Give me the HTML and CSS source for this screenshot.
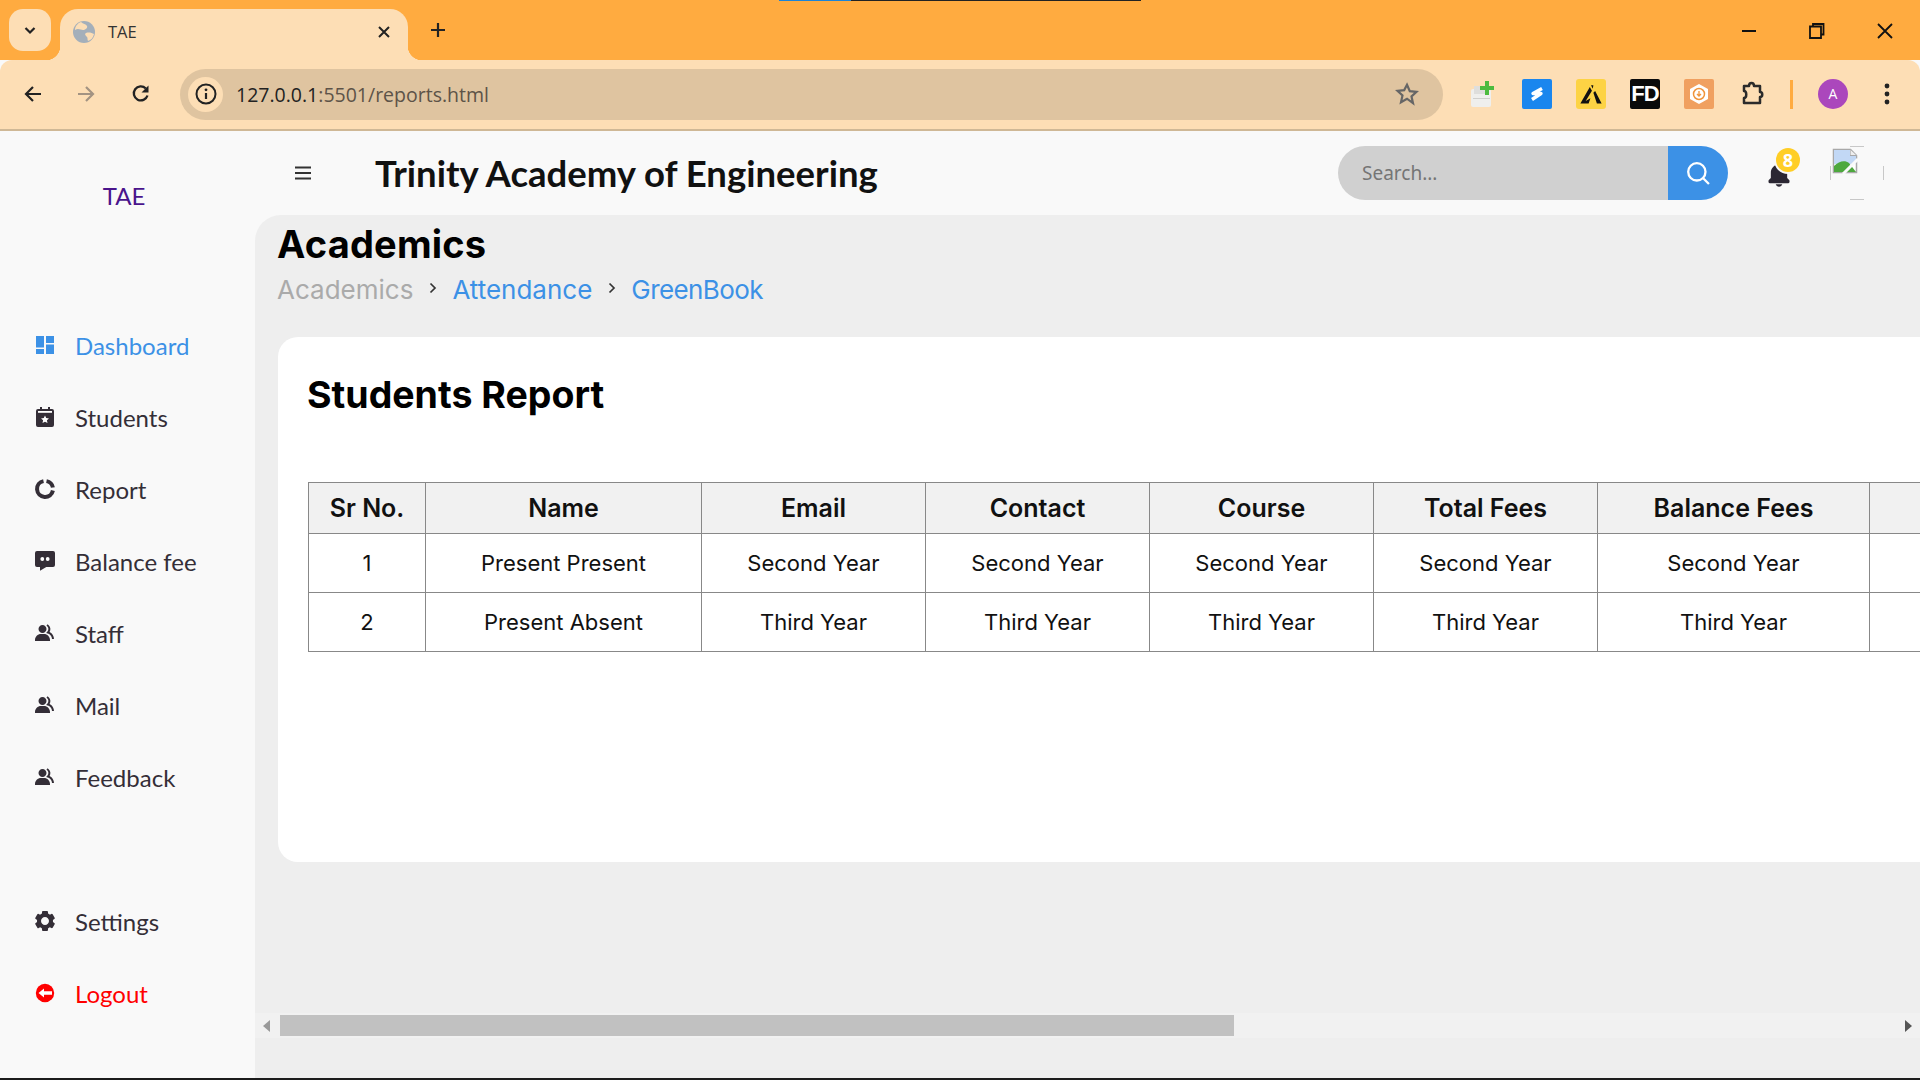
FILE: index.html
```html
<!DOCTYPE html>
<html lang="en">
<head>
    <meta charset="UTF-8">
    <meta name="viewport" content="width=device-width, initial-scale=1.0">
    <title>TAE</title>
    <link rel="stylesheet" href="styles.css">
</head>
<body>

<!-- browser chrome -->
<div class="tabstrip">
    <div class="loading-line"><span class="loading-blue"></span></div>
    <div class="tab-search">
        <svg width="18" height="18" viewBox="0 0 18 18"><path d="M4.500 7l4.500 4.500L13.500 7" fill="none" stroke="#222" stroke-width="2.200"/></svg>
    </div>
    <div class="tab">
        <svg class="favicon" width="22" height="22" viewBox="0 0 22 22"><circle cx="11" cy="11" r="11" fill="#a4afba"/><path d="M8 1c2 2 5 2 6 4s-2 4-4 4-5-2-8 0c0-4 3-7 6-8zM13 12c3-1 6 0 8 1-1 4-3 6-6 7-1-2 0-3-1-4s-3-3-1-4z" fill="#fddeb5"/></svg>
        <span class="tab-title">TAE</span>
        <svg class="tab-close" width="14" height="14" viewBox="0 0 14 14"><path d="M2 2l10 10M12 2L2 12" stroke="#222" stroke-width="2"/></svg>
    </div>
    <svg class="new-tab" width="18" height="18" viewBox="0 0 18 18"><path d="M9 2v14M2 9h14" stroke="#222" stroke-width="2.200"/></svg>
    <div class="window-controls">
        <svg width="16" height="16" viewBox="0 0 16 16"><path d="M1 8h14" stroke="#111" stroke-width="2"/></svg>
        <svg width="16" height="16" viewBox="0 0 16 16"><path d="M4 3.500V1h10.500v10.500H12M1 3.500h11V15H1z" fill="none" stroke="#111" stroke-width="1.800"/></svg>
        <svg width="16" height="16" viewBox="0 0 16 16"><path d="M1 1l14 14M15 1L1 15" stroke="#111" stroke-width="1.800"/></svg>
    </div>
</div>

<div class="toolbar">
    <div class="nav-buttons">
        <svg width="20" height="20" viewBox="0 0 20 20"><path d="M18 10H3M10 3l-7 7 7 7" fill="none" stroke="#222" stroke-width="2.200"/></svg>
        <svg width="20" height="20" viewBox="0 0 20 20"><path d="M2 10h15M10 3l7 7-7 7" fill="none" stroke="#a39382" stroke-width="2.200"/></svg>
        <svg class="reload" width="20" height="20" viewBox="0 0 20 20"><path d="M16.500 11.500A7 7 0 1 1 14.800 4.500" fill="none" stroke="#222" stroke-width="2.300"/><path d="M17.500 1.500v7h-7z" fill="#222"/></svg>
    </div>
    <div class="urlbar">
        <div class="site-info">
            <svg width="22" height="22" viewBox="0 0 22 22"><circle cx="11" cy="11" r="9.500" fill="none" stroke="#222" stroke-width="2"/><path d="M11 10v6" stroke="#222" stroke-width="2.200"/><circle cx="11" cy="6.800" r="1.400" fill="#222"/></svg>
        </div>
        <span class="url"><span class="url-host">127.0.0.1</span>:5501/reports.html</span>
        <svg class="star" width="24" height="24" viewBox="0 0 24 24"><path d="M12 2.800l2.800 6.300 6.800.7-5.100 4.600 1.500 6.800L12 16.700l-6 3.500 1.500-6.800-5.100-4.600 6.800-.7z" fill="none" stroke="#666" stroke-width="2.200"/></svg>
    </div>
    <div class="extensions">
        <div class="ext">
            <svg width="26" height="28" viewBox="0 0 26 28"><rect x="1" y="9" width="20" height="18" rx="2" fill="#efefed"/><rect x="4" y="6" width="15" height="8" fill="#dededc"/><rect x="3" y="18" width="17" height="1" fill="#cfcfcd"/><path d="M15 1h4v5h5v4h-5v5h-4v-5h-5V6h5z" fill="#4cbb3f"/></svg>
        </div>
        <div class="ext ext-blue">
            <svg width="20" height="20" viewBox="0 0 20 20"><path d="M15 4.500L6 9.500h8L5 15.500" fill="none" stroke="#fff" stroke-width="3.400" stroke-linejoin="round"/></svg>
        </div>
        <div class="ext ext-yellow">
            <svg width="26" height="26" viewBox="0 0 22 22"><path d="M2 19L10 5l1.800 3.200L6.500 17l4-2.500L9 19z" fill="#111"/><path d="M12.500 6.500L11 3.500h2zM13 10l1.500-1.500L20 19h-4z" fill="#111"/></svg>
        </div>
        <div class="ext ext-fd">FD</div>
        <div class="ext ext-orange">
            <svg width="24" height="24" viewBox="0 0 24 24"><path d="M12 2l9 5v10l-9 5-9-5V7z" fill="#fff"/><circle cx="12" cy="12" r="5.500" fill="none" stroke="#f0953c" stroke-width="1.500"/><path d="M12 9v5M10 12l2 2 2-2" fill="none" stroke="#f0953c" stroke-width="1.300"/></svg>
        </div>
        <div class="ext">
            <svg width="26" height="26" viewBox="0 0 26 26"><path d="M4 5h5c0-4 5-4 5 0h6v6c3 0 3 5 0 5v6H4v-5c3 0 3-7 0-7z" fill="none" stroke="#2b2b2b" stroke-width="2.500" stroke-linejoin="round"/></svg>
        </div>
    </div>
    <div class="toolbar-sep"></div>
    <div class="avatar">A</div>
    <svg class="kebab" width="6" height="24" viewBox="0 0 6 24"><circle cx="3" cy="4" r="2.400" fill="#222"/><circle cx="3" cy="12" r="2.400" fill="#222"/><circle cx="3" cy="20" r="2.400" fill="#222"/></svg>
</div>

<!-- page -->
<div class="app">
    <aside class="sidebar">
        <div class="brand">TAE</div>
        <nav class="menu">
            <a class="menu-item active">
                <svg class="icon" viewBox="0 0 24 24" fill="currentColor"><rect x="3" y="3" width="8" height="11.500"/><rect x="3" y="16" width="8" height="5"/><rect x="13" y="3" width="8" height="7"/><rect x="13" y="11.500" width="8" height="9.500"/></svg>
                Dashboard
            </a>
            <a class="menu-item">
                <svg class="icon" viewBox="0 0 24 24" fill="currentColor"><path d="M5 4h2V2h2v2h6V2h2v2h2a2 2 0 0 1 2 2v14a2 2 0 0 1-2 2H5a2 2 0 0 1-2-2V6a2 2 0 0 1 2-2z"/><rect x="5" y="6" width="14" height="1.800" fill="#fff"/><path d="M12 10.500l1.200 2.600 2.800.3-2.100 1.900.6 2.800-2.500-1.400-2.500 1.400.6-2.800L8 13.400l2.800-.3z" fill="#fff"/></svg>
                Students
            </a>
            <a class="menu-item">
                <svg class="icon" viewBox="0 0 24 24"><path d="M10.500 4.100A8 8 0 1 0 19.900 13.500" fill="none" stroke="currentColor" stroke-width="4"/><path d="M13.500 4.100A8 8 0 0 1 19.900 10.500" fill="none" stroke="currentColor" stroke-width="4"/></svg>
                Report
            </a>
            <a class="menu-item">
                <svg class="icon" viewBox="0 0 24 24" fill="currentColor"><path d="M4 2h16a2 2 0 0 1 2 2v12a2 2 0 0 1-2 2h-6.700L7 21.800V18H4a2 2 0 0 1-2-2V4a2 2 0 0 1 2-2z"/><circle cx="9.300" cy="10" r="1.900" fill="#fff"/><circle cx="14.700" cy="10" r="1.900" fill="#fff"/></svg>
                Balance fee
            </a>
            <a class="menu-item">
                <svg class="icon" viewBox="0 0 24 24" fill="currentColor"><path d="M16.604 11.048a5.670 5.670 0 0 0 .751-3.440c-.179-1.784-1.175-3.361-2.803-4.440l-1.105 1.666c1.119.742 1.800 1.799 1.918 2.974a3.693 3.693 0 0 1-1.072 2.986l-1.192 1.192 1.618.475C18.951 13.701 19 17.957 19 18h2c0-1.789-.956-5.285-4.396-6.952z"/><path d="M9.500 12c2.206 0 4-1.794 4-4s-1.794-4-4-4-4 1.794-4 4 1.794 4 4 4zm1.500 1H8c-3.309 0-6 2.691-6 6v1h15v-1c0-3.309-2.691-6-6-6z"/></svg>
                Staff
            </a>
            <a class="menu-item">
                <svg class="icon" viewBox="0 0 24 24" fill="currentColor"><path d="M16.604 11.048a5.670 5.670 0 0 0 .751-3.440c-.179-1.784-1.175-3.361-2.803-4.440l-1.105 1.666c1.119.742 1.800 1.799 1.918 2.974a3.693 3.693 0 0 1-1.072 2.986l-1.192 1.192 1.618.475C18.951 13.701 19 17.957 19 18h2c0-1.789-.956-5.285-4.396-6.952z"/><path d="M9.500 12c2.206 0 4-1.794 4-4s-1.794-4-4-4-4 1.794-4 4 1.794 4 4 4zm1.500 1H8c-3.309 0-6 2.691-6 6v1h15v-1c0-3.309-2.691-6-6-6z"/></svg>
                Mail
            </a>
            <a class="menu-item">
                <svg class="icon" viewBox="0 0 24 24" fill="currentColor"><path d="M16.604 11.048a5.670 5.670 0 0 0 .751-3.440c-.179-1.784-1.175-3.361-2.803-4.440l-1.105 1.666c1.119.742 1.800 1.799 1.918 2.974a3.693 3.693 0 0 1-1.072 2.986l-1.192 1.192 1.618.475C18.951 13.701 19 17.957 19 18h2c0-1.789-.956-5.285-4.396-6.952z"/><path d="M9.500 12c2.206 0 4-1.794 4-4s-1.794-4-4-4-4 1.794-4 4 1.794 4 4 4zm1.500 1H8c-3.309 0-6 2.691-6 6v1h15v-1c0-3.309-2.691-6-6-6z"/></svg>
                Feedback
            </a>
        </nav>
        <nav class="menu menu-bottom">
            <a class="menu-item">
                <svg class="icon" viewBox="0 0 24 24" fill="currentColor"><path d="m2.344 15.271 2 3.460a1 1 0 0 0 1.366.365l1.396-.806c.580.457 1.221.832 1.895 1.112V21a1 1 0 0 0 1 1h4a1 1 0 0 0 1-1v-1.598a8.094 8.094 0 0 0 1.895-1.112l1.396.806c.477.275 1.091.110 1.366-.365l2-3.460a1.004 1.004 0 0 0-.365-1.366l-1.372-.793a7.683 7.683 0 0 0-.002-2.224l1.372-.793c.476-.275.641-.890.365-1.366l-2-3.460a1 1 0 0 0-1.366-.365l-1.396.806A8.034 8.034 0 0 0 15 4.598V3a1 1 0 0 0-1-1h-4a1 1 0 0 0-1 1v1.598A8.094 8.094 0 0 0 7.105 5.710L5.710 4.904a.999.999 0 0 0-1.366.365l-2 3.460a1.004 1.004 0 0 0 .365 1.366l1.372.793a7.683 7.683 0 0 0 0 2.224l-1.372.793c-.476.275-.641.890-.365 1.366zM12 8c2.206 0 4 1.794 4 4s-1.794 4-4 4-4-1.794-4-4 1.794-4 4-4z"/></svg>
                Settings
            </a>
            <a class="menu-item logout">
                <svg class="icon" viewBox="0 0 24 24"><circle cx="12" cy="12" r="9.200" fill="currentColor"/><path d="M19 10.300h-8V7.500L5.500 12l5.500 4.500v-2.800h8z" fill="#fff"/></svg>
                Logout
            </a>
        </nav>
    </aside>

    <div class="right-side">
        <header class="topbar">
            <svg class="hamburger" width="18" height="14" viewBox="0 0 18 14"><path d="M1 1.500h16M1 7h16M1 12.500h16" stroke="#333" stroke-width="1.800"/></svg>
            <div class="college-name">Trinity Academy of Engineering</div>
            <div class="search">
                <input class="search-input" type="text" placeholder="Search...">
                <button class="search-button">
                    <svg width="30" height="30" viewBox="0 0 26 26"><circle cx="12" cy="12" r="7.500" fill="none" stroke="#fff" stroke-width="2"/><path d="M17.500 17.500l5 5" stroke="#fff" stroke-width="2"/></svg>
                </button>
            </div>
            <div class="bell">
                <svg width="28" height="28" viewBox="0 0 24 24" fill="#2b2733"><path d="M12 22c1.311 0 2.407-.834 2.818-2H9.182C9.593 21.166 10.689 22 12 22zm7-7.414V10c0-3.217-2.185-5.927-5.145-6.742C13.562 2.520 12.846 2 12 2s-1.562.520-1.855 1.258C7.185 4.074 5 6.783 5 10v4.586l-1.707 1.707A.996.996 0 0 0 3 17v1a1 1 0 0 0 1 1h16a1 1 0 0 0 1-1v-1a.996.996 0 0 0-.293-.707L19 14.586z"/></svg>
                <span class="badge">8</span>
            </div>
            <svg class="profile-pic" width="54" height="54" viewBox="0 0 54 54">
                <path d="M20 .500h14M.500 20v14M53.500 20v14M20 53.500h14" fill="none" stroke="#c8c8c8"/>
                <path d="M3.500 3.500h17l6 6v17h-23z" fill="#fff" stroke="#a8a8a8" stroke-width="1.500"/>
                <path d="M20 3.500v6h6.500" fill="#eee" stroke="#a8a8a8" stroke-width="1.200"/>
                <path d="M4 4h16v6h6v8H4z" fill="#c2d8f5"/>
                <path d="M4 26v-6c5-5 11-6 15-3l7 9z" fill="#4da83e"/>
                <path d="M28 13L13 28" stroke="#fafafa" stroke-width="3"/>
            </svg>
        </header>

        <main class="main">
            <div class="scroll-area">
                <h1 class="page-title">Academics</h1>
                <div class="breadcrumb">
                    <span class="crumb-muted">Academics</span>
                    <svg class="crumb-sep" width="10" height="14" viewBox="0 0 10 14"><path d="M2.500 2.500L7 7l-4.500 4.500" fill="none" stroke="#333" stroke-width="1.700"/></svg>
                    <span class="crumb-link">Attendance</span>
                    <svg class="crumb-sep" width="10" height="14" viewBox="0 0 10 14"><path d="M2.500 2.500L7 7l-4.500 4.500" fill="none" stroke="#333" stroke-width="1.700"/></svg>
                    <span class="crumb-link crumb-last">GreenBook</span>
                </div>
                <section class="card">
                    <h2 class="card-title">Students Report</h2>
                    <table class="report-table">
                        <colgroup>
                            <col class="col-sr"><col class="col-name"><col class="col-std"><col class="col-std"><col class="col-std"><col class="col-std"><col class="col-bal"><col class="col-last">
                        </colgroup>
                        <thead>
                            <tr>
                                <th>Sr No.</th>
                                <th>Name</th>
                                <th>Email</th>
                                <th>Contact</th>
                                <th>Course</th>
                                <th>Total Fees</th>
                                <th>Balance Fees</th>
                                <th></th>
                            </tr>
                        </thead>
                        <tbody>
                            <tr>
                                <td>1</td>
                                <td>Present Present</td>
                                <td>Second Year</td>
                                <td>Second Year</td>
                                <td>Second Year</td>
                                <td>Second Year</td>
                                <td>Second Year</td>
                                <td></td>
                            </tr>
                            <tr>
                                <td>2</td>
                                <td>Present Absent</td>
                                <td>Third Year</td>
                                <td>Third Year</td>
                                <td>Third Year</td>
                                <td>Third Year</td>
                                <td>Third Year</td>
                                <td></td>
                            </tr>
                        </tbody>
                    </table>
                </section>
            </div>
            <div class="scrollbar">
                <span class="arrow-left"></span>
                <div class="scroll-track"><div class="scroll-thumb"></div></div>
                <span class="arrow-right"></span>
            </div>
        </main>
    </div>
</div>
<div class="bottom-line"></div>

</body>
</html>
```

FILE: styles.css
```css
* {
    box-sizing: border-box;
}
html, body {
    margin: 0;
    padding: 0;
    height: 100%;
    overflow: hidden;
}
body {
    display: flex;
    flex-direction: column;
    height: 1080px;
    background: #f9f9f9;
    font-family: 'Lato', sans-serif;
}

/* browser chrome */
.tabstrip {
    position: relative;
    display: flex;
    align-items: flex-end;
    height: 60px;
    background: #ffab40;
    flex-shrink: 0;
}
.loading-line {
    position: absolute;
    top: 0;
    left: 779px;
    width: 362px;
    height: 1px;
    background: #222;
}
.loading-blue {
    display: block;
    width: 72px;
    height: 1px;
    background: #1a84d8;
}
.tab-search {
    display: flex;
    align-items: center;
    justify-content: center;
    width: 42px;
    height: 42px;
    margin: 0 9px 9px 9px;
    background: #fddeb5;
    border-radius: 14px;
}
.tab {
    position: relative;
    display: flex;
    align-items: center;
    width: 348px;
    height: 51px;
    padding: 0 17px 6px 13px;
    background: #fddeb5;
    border-radius: 18px 18px 0 0;
}
.tab::before, .tab::after {
    content: "";
    position: absolute;
    bottom: 0;
    width: 14px;
    height: 14px;
}
.tab::before {
    left: -14px;
    background: radial-gradient(circle at 0 0, transparent 14px, #fddeb5 14.500px);
}
.tab::after {
    right: -14px;
    background: radial-gradient(circle at 100% 0, transparent 14px, #fddeb5 14.500px);
}
.favicon {
    flex-shrink: 0;
}
.tab-title {
    flex: 1;
    margin-left: 13px;
    font-family: 'Open Sans', sans-serif;
    font-size: 16.500px;
    color: #333;
}
.new-tab {
    margin: 0 0 21px 21px;
}
.window-controls {
    display: flex;
    gap: 52px;
    margin: 0 27px 21px auto;
}
.toolbar {
    display: flex;
    align-items: center;
    height: 71px;
    padding: 0 23px 1px 0;
    background: #fddeb5;
    border-top-left-radius: 12px;
    border-top-right-radius: 12px;
    border-bottom: 2px solid #cfb896;
    flex-shrink: 0;
}
.nav-buttons {
    display: flex;
    gap: 33px;
    width: 180px;
    padding-left: 23px;
}
.reload {
    margin-left: 2px;
}
.urlbar {
    display: flex;
    align-items: center;
    width: 1263px;
    height: 51px;
    padding: 0 24px 0 8px;
    background: #dfc4a0;
    border-radius: 26px;
}
.site-info {
    display: flex;
    align-items: center;
    justify-content: center;
    width: 35px;
    height: 35px;
    background: #fddeb5;
    border-radius: 50%;
}
.url {
    flex: 1;
    margin-left: 13px;
    font-family: 'Open Sans', sans-serif;
    font-size: 19.500px;
    color: #5d5348;
}
.url-host {
    color: #222;
}
.extensions {
    display: flex;
    align-items: center;
    gap: 24px;
    margin-left: 25px;
}
.ext {
    display: flex;
    align-items: center;
    justify-content: center;
    width: 30px;
    height: 30px;
    border-radius: 2px;
}
.ext-blue {
    background: #1a86ee;
}
.ext-yellow {
    background: #fdd344;
    border-radius: 3px;
}
.ext-fd {
    background: #0a0a0a;
    color: #fff;
    font-family: 'Liberation Sans', sans-serif;
    font-weight: bold;
    font-size: 22px;
    letter-spacing: -1px;
    overflow: hidden;
}
.ext-orange {
    background: #f0a060;
}
.toolbar-sep {
    width: 3px;
    height: 29px;
    margin-left: 22px;
    background: #ffab40;
}
.avatar {
    width: 30px;
    height: 30px;
    margin-left: 25px;
    background: #ab47bc;
    border-radius: 50%;
    color: #fff;
    font-family: 'Open Sans', sans-serif;
    font-size: 14px;
    line-height: 30px;
    text-align: center;
}
.kebab {
    margin-left: 36px;
}

/* page layout */
.app {
    display: flex;
    flex: 1;
    min-height: 0;
}
.bottom-line {
    height: 2px;
    background: #1c1c1c;
    flex-shrink: 0;
}
.sidebar {
    display: flex;
    flex-direction: column;
    width: 255px;
    background: #f9f9f9;
    flex-shrink: 0;
}
.brand {
    height: 178px;
    padding-top: 48px;
    padding-right: 7px;
    color: #4a148c;
    font-size: 24px;
    line-height: 34px;
    text-align: center;
}
.menu-bottom {
    margin-top: 72px;
}
.menu-item {
    display: flex;
    align-items: center;
    gap: 18px;
    height: 72px;
    padding-left: 33px;
    color: #342e37;
    font-size: 24px;
    white-space: nowrap;
}
.menu-item.active {
    color: #3c91e6;
}
.menu-item.logout {
    color: #ff0000;
}
.icon {
    width: 24px;
    height: 24px;
    margin-top: -1px;
    flex-shrink: 0;
}
.right-side {
    display: flex;
    flex-direction: column;
    flex: 1;
    min-width: 0;
}
.topbar {
    display: flex;
    align-items: center;
    height: 84px;
    padding-left: 39px;
    flex-shrink: 0;
}
.hamburger {
    flex-shrink: 0;
}
.college-name {
    margin-left: 63px;
    color: #111;
    font-size: 36.500px;
    font-weight: 700;
    white-space: nowrap;
}
.search {
    display: flex;
    height: 54px;
    width: 390px;
    margin-left: auto;
}
.search-input {
    flex: 1;
    min-width: 0;
    padding: 0 24px;
    border: none;
    outline: none;
    background: #d0d0d0;
    border-radius: 27px 0 0 27px;
    font-family: 'Noto Sans', sans-serif;
    font-size: 19px;
}
.search-input::placeholder {
    color: #757575;
}
.search-button {
    display: flex;
    align-items: center;
    justify-content: center;
    width: 60px;
    padding: 0;
    border: none;
    background: #3c91e6;
    border-radius: 0 27px 27px 0;
}
.bell {
    position: relative;
    width: 28px;
    height: 28px;
    margin-left: 37px;
    margin-top: 4px;
}
.badge {
    position: absolute;
    top: -13px;
    left: 11px;
    width: 24px;
    height: 24px;
    background: #ffce26;
    border-radius: 50%;
    box-shadow: 0 0 0 2px #f9f9f9;
    color: #fff;
    font-family: 'Open Sans', sans-serif;
    font-size: 18px;
    font-weight: 700;
    line-height: 24px;
    text-align: center;
}
.profile-pic {
    margin-left: 37px;
    margin-right: 36px;
    flex-shrink: 0;
}
.main {
    display: flex;
    flex-direction: column;
    flex: 1;
    min-height: 0;
    padding-bottom: 40px;
    background: #eeeeee;
    border-top-left-radius: 26px;
    overflow: hidden;
}
.scroll-area {
    flex: 1;
    min-height: 0;
    padding: 7px 0 0 23px;
    overflow: hidden;
}
.page-title {
    margin: 0;
    margin-left: -1px;
    color: #000;
    font-family: 'Inter', sans-serif;
    font-size: 38px;
    font-weight: 700;
    letter-spacing: 0.2px;
    line-height: 44px;
}
.breadcrumb {
    display: flex;
    align-items: center;
    gap: 15px;
    height: 47px;
    margin-left: -1px;
    font-family: 'Inter', sans-serif;
    font-size: 26px;
}
.crumb-muted {
    color: #aaaaaa;
}
.crumb-link {
    color: #3c91e6;
}
.crumb-last {
    letter-spacing: -0.600px;
}
.crumb-sep {
    margin-top: -4px;
    margin-right: -1px;
}
.card {
    width: 2600px;
    height: 525px;
    margin-top: 24px;
    padding: 30px 29px;
    background: #fff;
    border-radius: 20px;
}
.card-title {
    margin: 0 0 59px 0;
    color: #000;
    font-family: 'Inter', sans-serif;
    font-size: 37.500px;
    font-weight: 700;
    line-height: 56px;
}
.report-table {
    width: 2000px;
    margin-left: 1px;
    border-collapse: collapse;
    table-layout: fixed;
    font-family: 'Inter', sans-serif;
    color: #111;
}
.col-sr { width: 117px; }
.col-name { width: 276px; }
.col-std { width: 224px; }
.col-bal { width: 272px; }
.report-table th, .report-table td {
    border: 1px solid #888;
    text-align: center;
}
.report-table th {
    height: 51px;
    background: #f1f1f1;
    font-size: 25px;
    font-weight: 600;
}
.report-table td {
    height: 59px;
    font-size: 22px;
    font-weight: 400;
}

/* horizontal scrollbar */
.scrollbar {
    display: flex;
    align-items: center;
    height: 25px;
    padding: 0 8px;
    background: #f1f1f1;
    flex-shrink: 0;
}
.arrow-left {
    width: 0;
    height: 0;
    border-top: 6px solid transparent;
    border-bottom: 6px solid transparent;
    border-right: 7px solid #999;
}
.arrow-right {
    width: 0;
    height: 0;
    border-top: 6px solid transparent;
    border-bottom: 6px solid transparent;
    border-left: 7px solid #555;
}
.scroll-track {
    flex: 1;
    height: 21px;
    margin: 0 10px;
}
.scroll-thumb {
    width: 954px;
    height: 21px;
    background: #c1c1c1;
}
```
